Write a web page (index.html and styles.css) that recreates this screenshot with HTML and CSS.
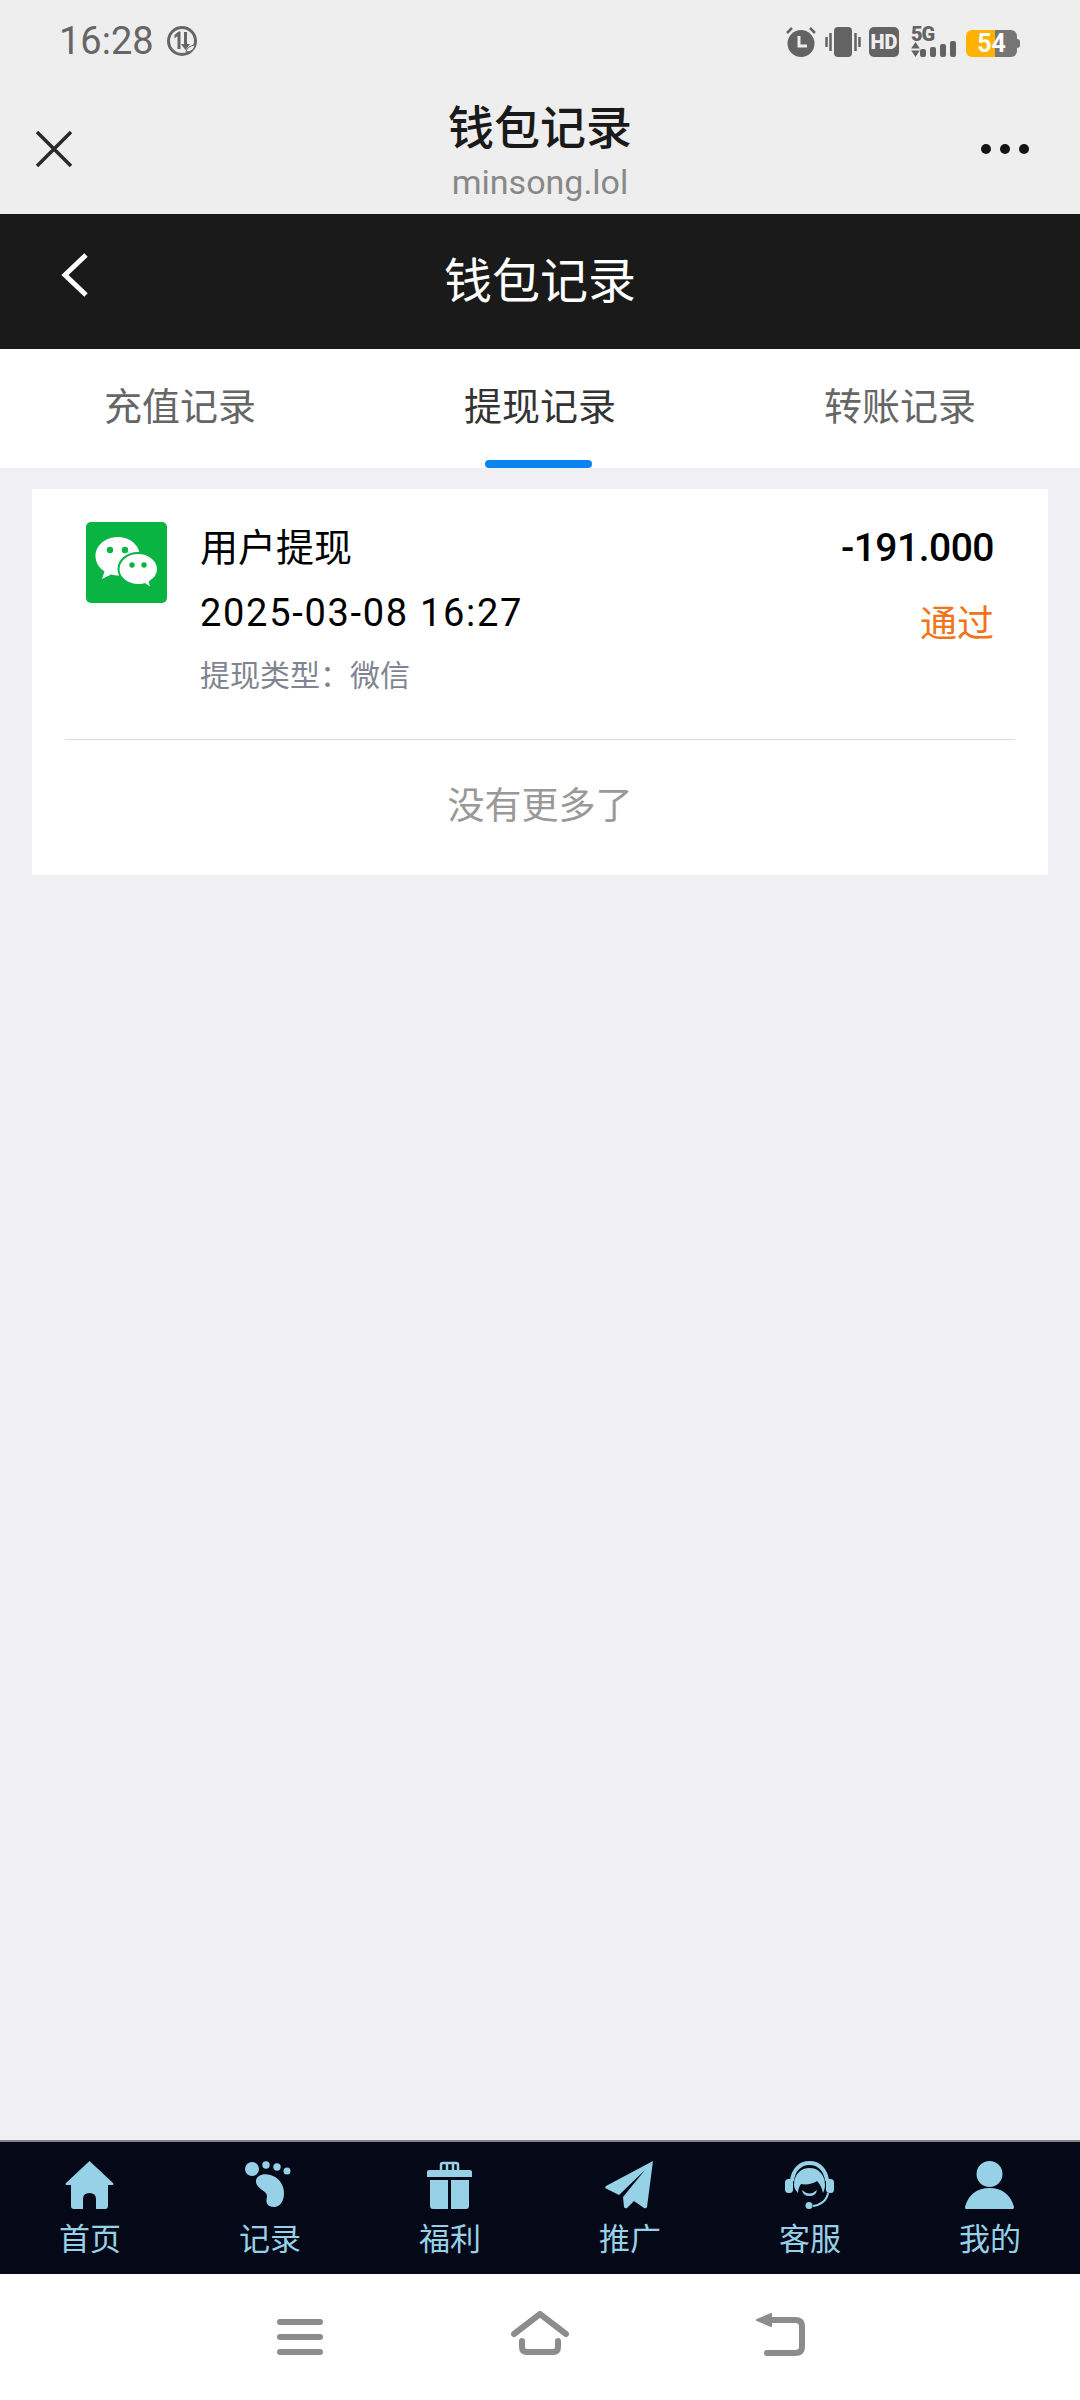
FILE: index.html
```html
<!DOCTYPE html>
<html lang="zh-CN">
<head>
    <meta charset="UTF-8">
    <meta name="viewport" content="width=device-width, initial-scale=1.0">
    <title>钱包记录</title>
    <link rel="stylesheet" href="styles.css">
</head>
<body>
    <header class="browser">
        <div class="status">
            <div class="status-left">
                <span class="time">16:28</span>
                <svg class="data-icon" viewBox="0 0 32 32">
                    <circle cx="16" cy="16" r="13.5" fill="none" stroke="#666" stroke-width="3"/>
                    <path d="M11.5 24V11l-3 2.500V10l4-3.500h2V24zM18 7h3v12h3l-4.500 6-4.500-6h3z" fill="#666"/>
                    <path d="M20 27q1-6 9-7-1 7-9 7z" fill="#eee" stroke="#666" stroke-width="1"/>
                </svg>
            </div>
            <div class="status-right">
                <svg class="st-alarm" viewBox="0 0 30 30">
                    <circle cx="15" cy="16.500" r="13.500" fill="#636363"/>
                    <path d="M1 6l5-5M29 6l-5-5" stroke="#636363" stroke-width="2.500"/>
                    <path d="M13 9v10h8" fill="none" stroke="#eee" stroke-width="3"/>
                </svg>
                <svg class="st-vib" viewBox="0 0 36 30">
                    <rect x="9" y="0" width="18" height="30" rx="4" fill="#636363"/>
                    <path d="M1.500 10v10M5.500 6v18M30.500 6v18M34.500 10v10" stroke="#636363" stroke-width="2.500"/>
                </svg>
                <span class="st-hd">HD</span>
                <div class="st-net">
                    <div class="st-five">
                        <span>5G</span>
                        <svg viewBox="0 0 8 14" class="st-arrows"><path d="M4 0l4 6H0zM0 8h8l-4 6z" fill="#636363"/></svg>
                    </div>
                    <div class="bars">
                        <i class="b1"></i><i class="b2"></i><i class="b3"></i><i class="b4"></i>
                    </div>
                </div>
                <div class="battery"><span>54</span></div>
            </div>
        </div>
        <div class="titlebar">
            <svg class="close" viewBox="0 0 38 38"><path d="M2 2l34 34M36 2L2 36" stroke="#2a2a2a" stroke-width="3.500"/></svg>
            <div class="page-name">
                <div class="page-title">钱包记录</div>
                <div class="page-host">minsong.lol</div>
            </div>
            <div class="dots"><i></i><i></i><i></i></div>
        </div>
    </header>

    <div class="topbar">
        <svg class="back" viewBox="0 0 28 46"><path d="M25 3L4 23l21 20" fill="none" stroke="#fff" stroke-width="5"/></svg>
        <div class="topbar-title">钱包记录</div>
    </div>

    <nav class="tabs">
        <div class="tab">充值记录</div>
        <div class="tab active">提现记录</div>
        <div class="tab">转账记录</div>
    </nav>

    <main class="content">
        <section class="card">
            <div class="record">
                <svg class="wechat" viewBox="0 0 81 81">
                    <rect width="81" height="81" rx="5" fill="#09b443"/>
                    <path d="M32 15c-12.500 0-22.500 8.500-22.500 19 0 6.500 3.500 12 9 15.500L16 57l9-4.500c2.300.6 4.600.9 7 .9 12 0 22-8.500 22-19S44.500 15 32 15z" fill="#fff"/>
                    <path d="M52 31c-10.500 0-19.500 7-19.500 16S41.500 63 52 63c2.300 0 4.500-.3 6.600-.9l7 4.400-1.800-6.600c5-3.100 8.200-7.500 8.200-12.900 0-9-9.500-16-20-16z" fill="#fff" stroke="#09b443" stroke-width="2"/>
                    <circle cx="24" cy="28" r="3.200" fill="#09b443"/>
                    <circle cx="39" cy="28" r="3.200" fill="#09b443"/>
                    <circle cx="46" cy="43" r="2.700" fill="#09b443"/>
                    <circle cx="58" cy="43" r="2.700" fill="#09b443"/>
                </svg>
                <div class="record-info">
                    <div class="record-name">用户提现</div>
                    <div class="record-date">2025-03-08 16:27</div>
                    <div class="record-type">提现类型：微信</div>
                </div>
                <div class="record-side">
                    <div class="amount">-191.000</div>
                    <div class="state">通过</div>
                </div>
            </div>
            <div class="no-more">没有更多了</div>
        </section>
    </main>

    <footer class="bottom-nav">
        <div class="nav-item">
            <svg viewBox="0 0 49 48"><path d="M24.500 0L48 22q1.500 2-1 2h-4v21q0 3-3 3h-9V38q0-6-6.500-6T18 38v10H9q-3 0-3-3V24H2q-2.500 0-1-2z"/></svg>
            <span>首页</span>
        </div>
        <div class="nav-item">
            <svg viewBox="0 0 49 48"><circle cx="7" cy="8" r="7"/><circle cx="21" cy="4" r="3.700"/><circle cx="32" cy="6" r="3.700"/><circle cx="42" cy="10" r="3.500"/><path d="M14 15c6-4 20-1 24 11 3 10-1 20-9 20-6 0-9-4-7-10 1-5-7-7-10-12-2-4-1-7 2-9z"/></svg>
            <span>记录</span>
        </div>
        <div class="nav-item">
            <svg viewBox="0 0 49 48"><path d="M4 9h41q2 0 2 2v5H2v-5q0-2 2-2zM5 19h18v29H8q-3 0-3-3zM26 19h18v26q0 3-3 3H26z"/><path d="M16 9V4q0-2 2-2h13q2 0 2 2v5M22 2v7M28 2v7" fill="none" stroke="#96d1e8" stroke-width="2.500"/></svg>
            <span>福利</span>
        </div>
        <div class="nav-item">
            <svg viewBox="0 0 49 48"><path d="M48 0L1 25q-1.500 1.500 0 2.500l13 6.500L40 9 18 36l1 10q1 2 3 1l7-7 10 7q2 1 3-1z"/></svg>
            <span>推广</span>
        </div>
        <div class="nav-item">
            <svg viewBox="0 0 49 48">
                <path d="M7 20C8 9 15 2 24.500 2S41 9 42 20" fill="none" stroke="#96d1e8" stroke-width="4"/>
                <rect x="0" y="18" width="8" height="14" rx="3.500"/>
                <rect x="41" y="18" width="8" height="14" rx="3.500"/>
                <path d="M9 24C9 13 16 7 24.500 7S40 13 40 24c0 3-1 6-2 8-1-5-3-9-6-12-4 3-11 4-16 3-2 3-3 6-3 9-2-2-4-5-4-8z"/>
                <path d="M17 29q7.500 7 15 0-1 6-7.500 6T17 29z"/>
                <path d="M43 32c-1 7-7 12-15 13" fill="none" stroke="#96d1e8" stroke-width="2"/>
                <circle cx="24" cy="44.500" r="3.500"/>
            </svg>
            <span>客服</span>
        </div>
        <div class="nav-item">
            <svg viewBox="0 0 49 48"><circle cx="24.500" cy="13" r="13"/><path d="M1 48q-1 0-1-2C3 34 12 27 24.500 27S46 34 49 46q0 2-1 2z"/></svg>
            <span>我的</span>
        </div>
    </footer>

    <div class="sys-nav">
        <svg class="sys-menu" viewBox="0 0 46 36"><path d="M3 3h40M3 18h40M3 33h40" stroke="#8c8c8c" stroke-width="6" stroke-linecap="round"/></svg>
        <svg class="sys-home" viewBox="0 0 58 44"><path d="M3 23L29 3l26 20M11 30v6q0 5 5 5h26q5 0 5-5v-6" fill="none" stroke="#8c8c8c" stroke-width="6" stroke-linecap="round"/></svg>
        <svg class="sys-back" viewBox="0 0 50 44"><path d="M10 8h30q7 0 7 6v21q0 6-7 6H12" fill="none" stroke="#8c8c8c" stroke-width="6" stroke-linecap="round"/><path d="M2 8l14-6v12z" fill="#8c8c8c" stroke="#8c8c8c" stroke-width="2" stroke-linejoin="round"/></svg>
    </div>
</body>
</html>
```

FILE: styles.css
```css
* {
    box-sizing: border-box;
}
html, body {
    margin: 0;
    height: 2400px;
}
body {
    display: flex;
    flex-direction: column;
    background-color: #efeff4;
    font-family: Roboto, "Noto Sans CJK SC", sans-serif;
    overflow: hidden;
}
svg {
    display: block;
    flex: none;
}

/* browser chrome */
.browser {
    height: 214px;
    background-color: #eeeeee;
    display: flex;
    flex-direction: column;
}
.status {
    height: 84px;
    padding: 25px 60px 0 59px;
    display: flex;
    justify-content: space-between;
    align-items: flex-start;
}
.status-left {
    display: flex;
    align-items: center;
    gap: 12px;
    height: 32px;
}
.time {
    font-size: 38px;
    line-height: 32px;
    color: #666;
}
.data-icon {
    width: 32px;
    height: 32px;
}
.status-right {
    display: flex;
    align-items: flex-end;
    height: 32px;
}
.st-alarm {
    width: 30px;
    height: 30px;
}
.st-vib {
    width: 36px;
    height: 30px;
    margin-left: 9px;
}
.st-hd {
    width: 30px;
    height: 30px;
    margin-left: 8px;
    border-radius: 5px;
    background-color: #636363;
    color: #eee;
    font-size: 20px;
    font-weight: 900;
    line-height: 30px;
    text-align: center;
}
.st-net {
    display: flex;
    align-items: flex-end;
    margin-left: 12px;
    gap: 1px;
    height: 32px;
}
.st-five {
    width: 23px;
    display: flex;
    flex-direction: column;
    align-items: flex-start;
    color: #636363;
}
.st-five span {
    font-size: 20px;
    font-weight: 900;
    line-height: 16px;
    letter-spacing: -1px;
    white-space: nowrap;
}
.st-arrows {
    width: 9px;
    height: 15px;
}
.bars {
    display: flex;
    align-items: flex-end;
    gap: 4px;
    margin-left: -15px;
}
.bars i {
    display: block;
    width: 6px;
    background-color: #636363;
    border-radius: 2px;
}
.b1 {
    height: 8px;
}
.b2 {
    height: 10px;
}
.b3 {
    height: 13px;
}
.b4 {
    height: 16px;
}
.battery {
    width: 51px;
    height: 27px;
    margin-left: 10px;
    margin-right: 3px;
    border-radius: 6px;
    background: linear-gradient(to right, #ffb300 0, #ffb300 56%, #757575 56%, #757575 100%);
    color: #fff;
    font-size: 25px;
    font-weight: 700;
    line-height: 27px;
    text-align: center;
    position: relative;
}
.battery::after {
    content: "";
    position: absolute;
    right: -3px;
    top: 9px;
    width: 3px;
    height: 9px;
    border-radius: 0 3px 3px 0;
    background-color: #757575;
}
.titlebar {
    flex: 1;
    display: grid;
    grid-template-columns: 1fr auto 1fr;
    align-items: center;
    padding: 0 51px;
}
.close {
    width: 38px;
    height: 38px;
    margin-left: -16px;
}
.page-name {
    text-align: center;
    padding-top: 12px;
}
.page-title {
    font-size: 46px;
    font-weight: 500;
    line-height: 54px;
    color: #1a1a1a;
}
.page-host {
    font-size: 34px;
    line-height: 54px;
    color: #888;
}
.dots {
    display: flex;
    justify-content: flex-end;
    gap: 9px;
}
.dots i {
    display: block;
    width: 10px;
    height: 10px;
    border-radius: 50%;
    background-color: #141414;
}

/* dark title */
.topbar {
    height: 135px;
    background-color: #1a1a1a;
    display: grid;
    grid-template-columns: 1fr auto 1fr;
    align-items: center;
    padding: 0 61px;
}
.back {
    width: 28px;
    height: 46px;
    margin-top: -14px;
}
.topbar-title {
    font-size: 48px;
    line-height: 60px;
    color: #fff;
}

/* tabs */
.tabs {
    height: 119px;
    background-color: #fff;
    display: grid;
    grid-template-columns: repeat(3, 1fr);
}
.tab {
    font-size: 38px;
    color: #666;
    text-align: center;
    line-height: 116px;
    position: relative;
}
.tab.active {
    color: #333;
}
.tab.active::after {
    content: "";
    position: absolute;
    left: 125px;
    bottom: 0;
    width: 107px;
    height: 8px;
    border-radius: 4px;
    background-color: #0a84f0;
}

/* records */
.content {
    flex: 1;
    padding: 21px 32px 0;
}
.card {
    background-color: #fff;
    height: 386px;
    padding: 0 33px;
}
.record {
    display: flex;
    align-items: flex-start;
    padding: 27px 21px 33px;
    border-bottom: 1px solid #dcdcdc;
}
.wechat {
    width: 81px;
    height: 81px;
    margin-top: 6px;
    margin-right: 33px;
}
.record-info {
    flex: 1;
}
.record-name {
    font-size: 38px;
    line-height: 64px;
    color: #000;
}
.record-date {
    font-size: 38px;
    line-height: 66px;
    letter-spacing: 1.7px;
    color: #000;
}
.record-type {
    font-size: 30px;
    line-height: 60px;
    color: #7f8590;
}
.record-side {
    text-align: right;
}
.amount {
    font-size: 39px;
    font-weight: 500;
    line-height: 64px;
    color: #000;
    letter-spacing: -0.5px;
}
.state {
    font-size: 37px;
    line-height: 64px;
    margin-top: 13px;
    color: #f0751a;
}
.no-more {
    height: 135px;
    line-height: 134px;
    font-size: 37px;
    text-align: center;
    color: #999;
}

/* bottom nav */
.bottom-nav {
    height: 134px;
    background-color: #050816;
    border-top: 2px solid #85858f;
    display: grid;
    grid-template-columns: repeat(6, 1fr);
    padding-top: 19px;
}
.nav-item {
    display: flex;
    flex-direction: column;
    align-items: center;
    color: #96d1e8;
}
.nav-item svg {
    width: 49px;
    height: 48px;
    fill: #96d1e8;
    margin-right: 2px;
}
.nav-item span {
    font-size: 31px;
    line-height: 46px;
    margin-top: 8px;
}

/* system nav */
.sys-nav {
    height: 126px;
    background-color: #fff;
    display: grid;
    grid-template-columns: repeat(3, 240px);
    justify-content: center;
    justify-items: center;
    align-items: center;
}
.sys-menu {
    width: 46px;
    height: 36px;
}
.sys-home {
    width: 58px;
    height: 44px;
    margin-bottom: 8px;
}
.sys-back {
    width: 50px;
    height: 44px;
    margin-bottom: 6px;
}
```
